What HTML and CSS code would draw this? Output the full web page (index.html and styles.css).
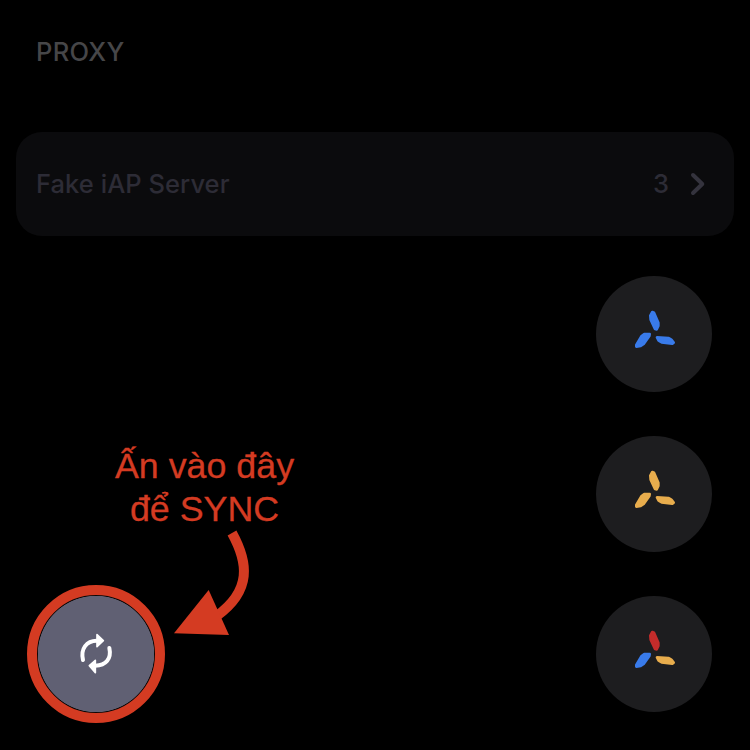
FILE: index.html
```html
<!DOCTYPE html>
<html lang="vi">
<head>
<meta charset="utf-8">
<title>Proxy</title>
<link rel="stylesheet" href="styles.css">
</head>
<body>
<svg class="defs" aria-hidden="true">
  <symbol id="fan" viewBox="-72 -72 348 348">
    <path class="blade-top" d="M97 36L102 38L115 68L115 78L110 88L105 87L92 59L91 47Z"/>
    <path class="blade-left" d="M73 102L89 102L88 108L71 132L62 138L49 140L49 135L64 109Z"/>
    <path class="blade-right" d="M111 112L145 114L154 119L161 128L157 131L125 127L116 122Z"/>
  </symbol>
</svg>
<main class="screen">
  <h2 class="section-title">PROXY</h2>
  <div class="row">
    <span class="label">Fake iAP Server</span>
    <span class="count">3</span>
    <svg class="chevron" viewBox="0 0 16 24"><path d="M3 3L12.300 12L3 21"/></svg>
  </div>
  <div class="actions">
    <div class="left">
      <p class="hint">Ấn vào đây<br>để SYNC</p>
      <button class="sync" aria-label="Sync">
        <svg class="glyph" viewBox="-96 -96 348 348">
          <path class="arc" d="M39 96C31 62 50 38 80 38M118 60C125 92 108 113 76 113"/>
          <path class="head" d="M81 20L100 38L81 56ZM76 97L58 113L76 134Z"/>
        </svg>
      </button>
      <svg class="arrow" viewBox="0 0 630 660">
        <path class="shaft" d="M396 309C445 398 456 481 350 558"/>
        <path class="tip" d="M222 610L326 480L387 615Z"/>
      </svg>
    </div>
    <div class="fabs">
      <button class="fab blue" aria-label="Blue"><svg class="glyph"><use href="#fan"/></svg></button>
      <button class="fab amber" aria-label="Amber"><svg class="glyph"><use href="#fan"/></svg></button>
      <button class="fab multi" aria-label="Multicolor"><svg class="glyph"><use href="#fan"/></svg></button>
    </div>
  </div>
</main>
</body>
</html>
```
FILE: styles.css
```css
* { box-sizing: border-box; }
body { margin: 0; background: #000; font-family: Inter, "Liberation Sans", sans-serif; }
button { padding: 0; font: inherit; }
.defs { position: absolute; width: 0; height: 0; }
.screen { width: 750px; height: 750px; padding: 36px 16px 0; overflow: hidden; }
.section-title {
  margin: 0 0 64px;
  padding-left: 20px;
  font-size: 25.500px;
  line-height: 32px;
  font-weight: 500;
  letter-spacing: 0.300px;
  color: #464648;
}
.row {
  display: flex;
  align-items: center;
  height: 104px;
  padding: 0 28px 0 20px;
  border-radius: 26px;
  background: #0b0b0d;
  color: #2d2c36;
  font-size: 25.500px;
  font-weight: 500;
}
.label { flex: 1; padding-bottom: 2px; letter-spacing: 0.050px; }
.count { padding-bottom: 2px; }
.chevron { width: 16px; height: 24px; margin-left: 21px; }
.chevron path { fill: none; stroke: #34333d; stroke-width: 4; stroke-linecap: round; stroke-linejoin: round; }
.actions { display: flex; justify-content: space-between; padding: 40px 22px 0 11px; }
.left { position: relative; width: 300px; padding-top: 169px; }
.hint {
  margin: 0 0 54px;
  width: 355px;
  text-align: center;
  font-family: "Liberation Sans", sans-serif;
  font-size: 35.800px;
  line-height: 43px;
  color: #d43b22;
  -webkit-text-stroke: 0.300px #d43b22;
}
.sync {
  display: block;
  width: 138px;
  height: 138px;
  border: 10px solid #d43b22;
  border-radius: 50%;
  background: radial-gradient(circle, #606073 57.800px, #0b0808 58.500px);
}
.sync .glyph { margin: 1px; }
.glyph { display: block; width: 116px; height: 116px; }
.arc { fill: none; stroke: #fff; stroke-width: 12; stroke-linecap: round; }
.head { fill: #fff; stroke: #fff; stroke-width: 5; stroke-linejoin: round; }
.arrow { position: absolute; left: 73px; top: 154px; width: 210px; height: 220px; }
.shaft { fill: none; stroke: #d43b22; stroke-width: 30; }
.tip { fill: #d43b22; }
.fabs { display: flex; flex-direction: column; gap: 44px; }
.fab { width: 116px; height: 116px; border: 0; border-radius: 50%; background: #1d1d1f; }
.blade-top, .blade-left, .blade-right { stroke-width: 8; stroke-linejoin: round; }
.blade-top { fill: var(--top); stroke: var(--top); }
.blade-left { fill: var(--left); stroke: var(--left); }
.blade-right { fill: var(--right); stroke: var(--right); }
.blue { --top: #397bea; --left: #397bea; --right: #397bea; }
.amber { --top: #e8ad4d; --left: #e8ad4d; --right: #e8ad4d; }
.multi { --top: #c32c2b; --left: #397bea; --right: #e8ad4d; }
```
